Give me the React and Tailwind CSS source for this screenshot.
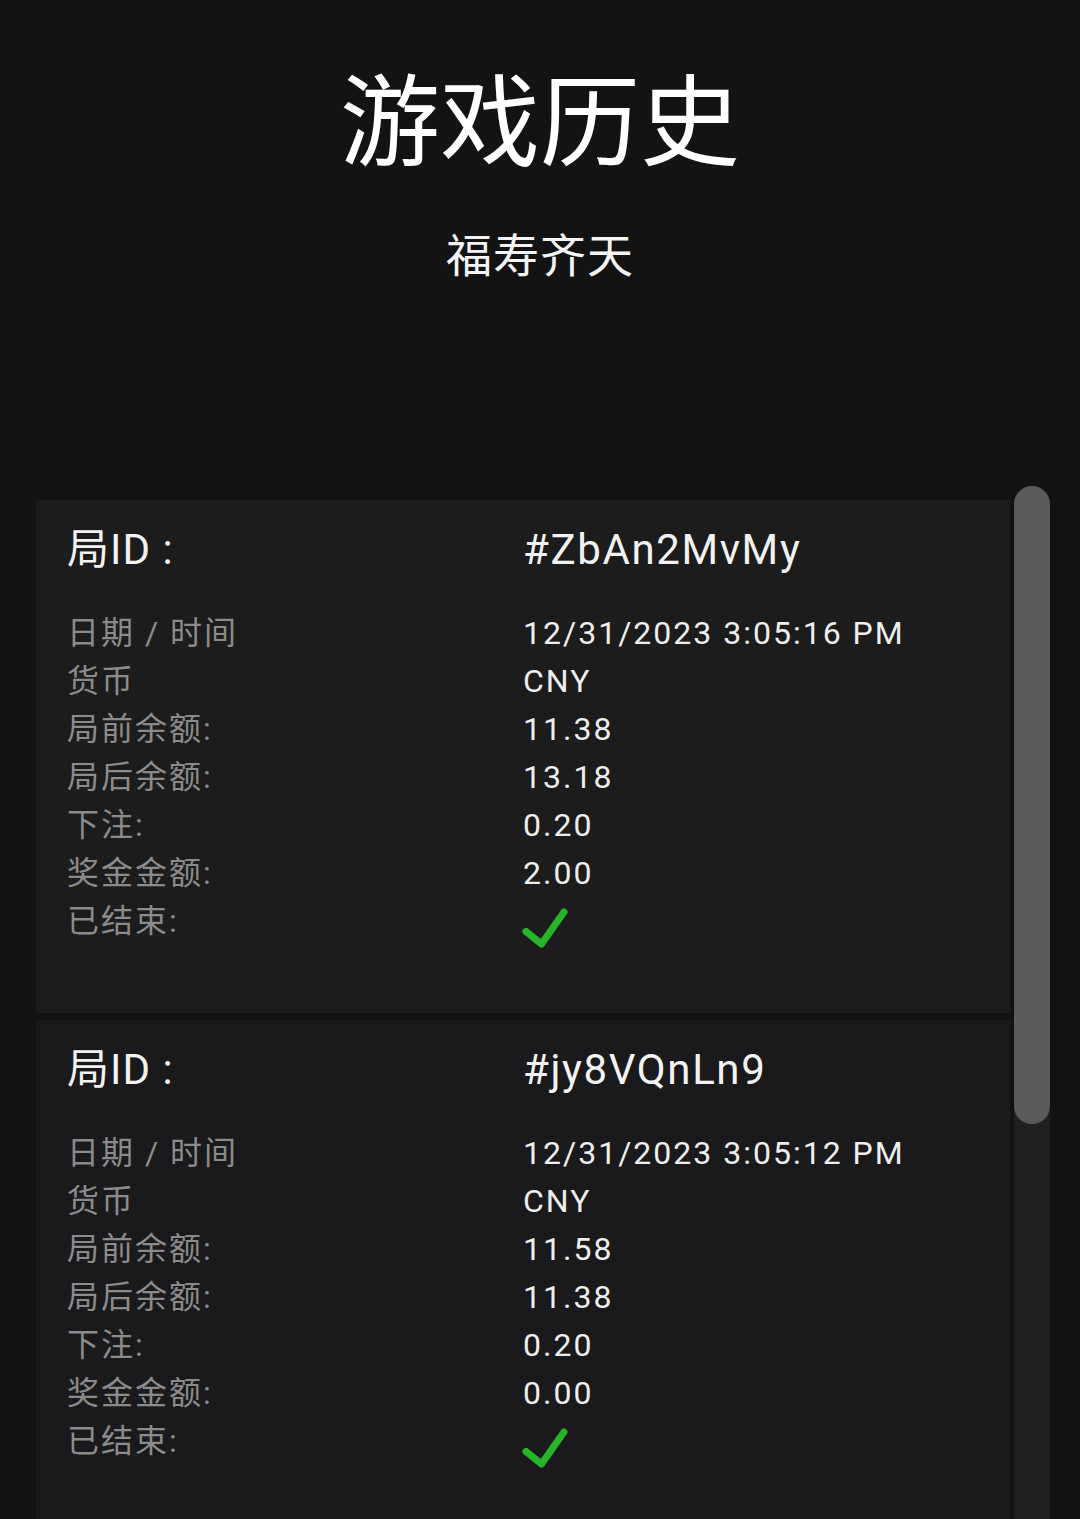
import React from "react";

const FONT = { fontFamily: "Roboto, 'Noto Sans CJK SC', sans-serif" };

const rounds = [
  {
    id: "#ZbAn2MvMy",
    rows: ["12/31/2023 3:05:16 PM", "CNY", "11.38", "13.18", "0.20", "2.00"],
  },
  {
    id: "#jy8VQnLn9",
    rows: ["12/31/2023 3:05:12 PM", "CNY", "11.58", "11.38", "0.20", "0.00"],
  },
];

const labels = ["日期 / 时间", "货币", "局前余额:", "局后余额:", "下注:", "奖金金额:"];

function Check() {
  return (
    <svg width="48" height="48" viewBox="0 0 48 48" className="overflow-visible">
      <path
        d="M3 34.5 L18.5 47 L41 15"
        fill="none"
        stroke="#27b527"
        strokeWidth="7"
        strokeLinecap="round"
        strokeLinejoin="round"
      />
    </svg>
  );
}

function Card({ data, tint }) {
  return (
    <div className={`${tint} pl-[31px] pr-[31px] pt-[26px] pb-[68px]`}>
      <div className="grid grid-cols-2 h-[48px] items-center text-[42px] leading-[48px] text-[#f2f2f2]">
        <div className="tracking-[1px]">局ID :</div>
        <div className="tracking-[1.6px]">{data.id}</div>
      </div>
      <div className="mt-[35px]">
        {labels.map((l, i) => (
          <div key={l} className="grid grid-cols-2 h-[48px] text-[32px] leading-[48px]">
            <div className="text-[#8b8b8b] tracking-[2px]">{l}</div>
            <div className="text-[#eeeeee] tracking-[2px]">{data.rows[i]}</div>
          </div>
        ))}
        <div className="grid grid-cols-2 h-[48px] text-[32px] leading-[48px]">
          <div className="text-[#8b8b8b] tracking-[2px]">已结束:</div>
          <div className="h-[48px]">
            <Check />
          </div>
        </div>
      </div>
    </div>
  );
}

export default function App() {
  return (
    <div className="w-[1080px] h-[1519px] overflow-hidden bg-[#131313]" style={FONT}>
      <div className="pt-[74px] text-center text-white text-[100px] leading-[100px] font-normal">
        游戏历史
      </div>
      <div className="mt-[59px] text-center text-[#f4f4f4] text-[46px] leading-[46px] tracking-[1px]">
        福寿齐天
      </div>
      <div className="mt-[207px] flex">
        <div className="ml-[36px] w-[974px] pt-[14px] flex flex-col gap-[7px]">
          <Card data={rounds[0]} tint="bg-[#1c1c1c]" />
          <Card data={rounds[1]} tint="bg-[#1a1a1c]" />
        </div>
        <div className="ml-[4px] w-[36px] self-stretch bg-[#202022] rounded-t-full">
          <div className="h-[638px] rounded-full bg-[#5a5a5a]" />
        </div>
      </div>
    </div>
  );
}
